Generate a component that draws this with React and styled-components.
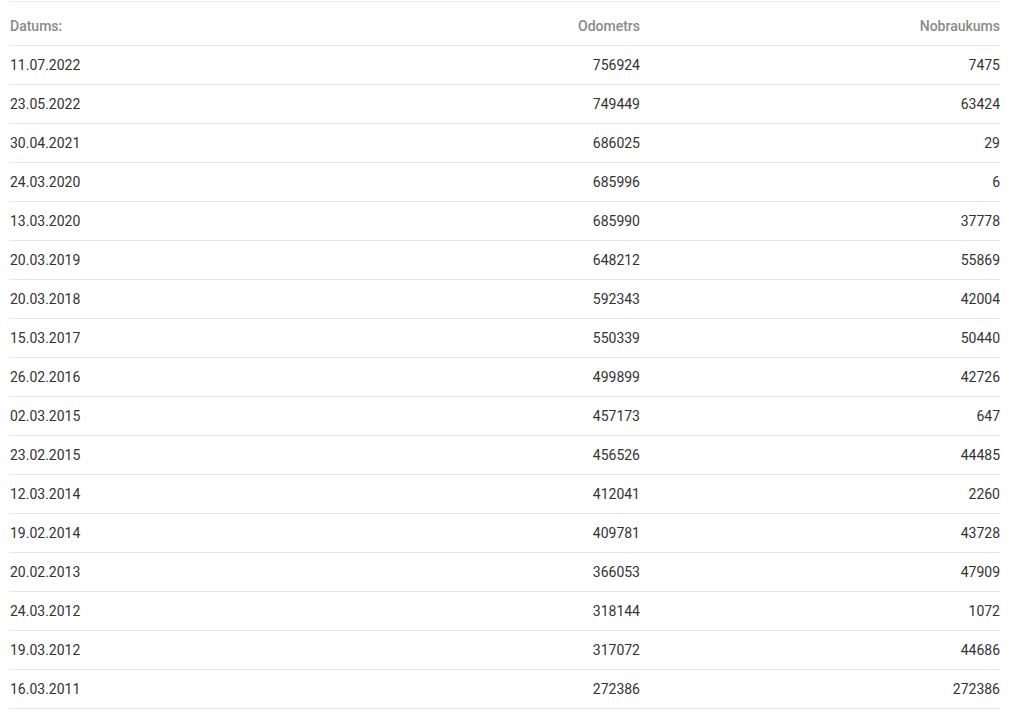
import React from 'react';
import styled, { createGlobalStyle } from 'styled-components';

const GlobalStyle = createGlobalStyle`
  body {
    margin: 0;
    background: #ffffff;
    font-family: Roboto, "Liberation Sans", sans-serif;
  }
`;

const Wrapper = styled.div`
  padding: 1px 24px 0 9px;
`;

const Table = styled.div`
  width: 991px;
  border-top: 1px solid #e9e9e9;
`;

const Row = styled.div`
  display: grid;
  grid-template-columns: 316px 315px 1fr;
  border-bottom: 1px solid #e6e6e6;
  padding: ${p => (p.head ? '14px 0 9px' : '9px 0')};
  font-size: 14px;
  line-height: 20px;
  color: ${p => (p.head ? '#8a8a8a' : '#333333')};
  font-weight: ${p => (p.head ? 500 : 400)};
`;

const Cell = styled.div`
  text-align: ${p => (p.right ? 'right' : 'left')};
  padding-left: ${p => (p.right ? 0 : '1px')};
`;

const rows = [
  ['11.07.2022', '756924', '7475'],
  ['23.05.2022', '749449', '63424'],
  ['30.04.2021', '686025', '29'],
  ['24.03.2020', '685996', '6'],
  ['13.03.2020', '685990', '37778'],
  ['20.03.2019', '648212', '55869'],
  ['20.03.2018', '592343', '42004'],
  ['15.03.2017', '550339', '50440'],
  ['26.02.2016', '499899', '42726'],
  ['02.03.2015', '457173', '647'],
  ['23.02.2015', '456526', '44485'],
  ['12.03.2014', '412041', '2260'],
  ['19.02.2014', '409781', '43728'],
  ['20.02.2013', '366053', '47909'],
  ['24.03.2012', '318144', '1072'],
  ['19.03.2012', '317072', '44686'],
  ['16.03.2011', '272386', '272386'],
];

export default function App() {
  return (
    <Wrapper>
      <GlobalStyle />
      <Table>
        <Row head>
          <Cell>Datums:</Cell>
          <Cell right>Odometrs</Cell>
          <Cell right>Nobraukums</Cell>
        </Row>
        {rows.map(([date, odo, dist]) => (
          <Row key={date + odo}>
            <Cell>{date}</Cell>
            <Cell right>{odo}</Cell>
            <Cell right>{dist}</Cell>
          </Row>
        ))}
      </Table>
    </Wrapper>
  );
}
